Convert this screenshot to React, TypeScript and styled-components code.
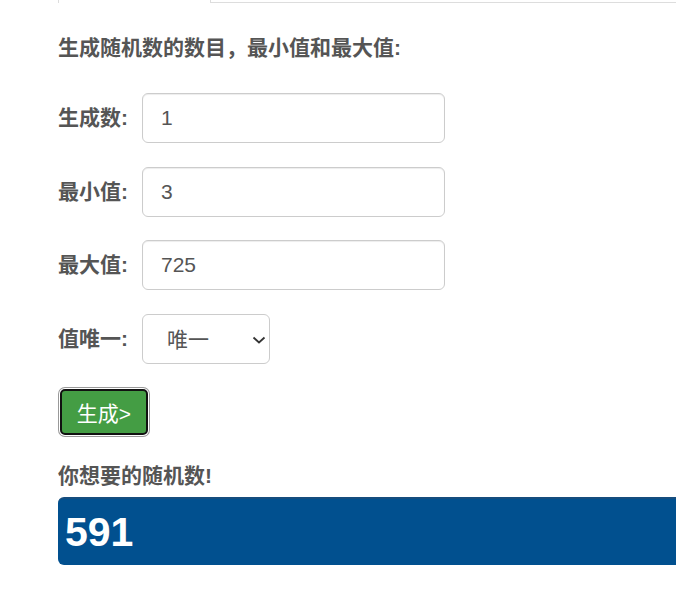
import React from 'react'
import styled, {createGlobalStyle} from 'styled-components'

const GlobalStyle = createGlobalStyle`
  html, body {
    margin: 0;
    padding: 0;
    background: #fff;
    overflow: hidden;
  }
  body {
    font-family: "Liberation Sans", Arial, "Noto Sans CJK SC", sans-serif;
    font-size: 21px;
    line-height: 1.42857;
    color: #555;
  }
`

const FONT = `"Liberation Sans", Arial, "Noto Sans CJK SC", sans-serif`

interface Field {
  label: string
  value: string
}

const FIELDS: Field[] = [
  {label: '生成数', value: '1'},
  {label: '最小值', value: '3'},
  {label: '最大值', value: '725'},
]

export default function App() {
  return (
    <>
      <GlobalStyle />
      <Page>
        <TabBar>
          <ActiveTab />
          <TabRest />
        </TabBar>
        <Content>
          <Heading>生成随机数的数目，最小值和最大值:</Heading>
          <Form>
            {FIELDS.map((field) => (
              <Row key={field.label}>
                <Label>{field.label}:</Label>
                <TextInput type="text" defaultValue={field.value} />
              </Row>
            ))}
            <Row>
              <Label>值唯一:</Label>
              <SelectWrap>
                <Select defaultValue="1">
                  <option value="1">唯一</option>
                  <option value="0">不唯一</option>
                </Select>
                <Chevron width="14" height="8" viewBox="0 0 14 8">
                  <path d="M1.5 1.5 L7 6.5 L12.5 1.5" fill="none" stroke="#333" strokeWidth="1.8" />
                </Chevron>
              </SelectWrap>
            </Row>
          </Form>
          <GenerateButton type="button">生成&gt;</GenerateButton>
          <ResultTitle>你想要的随机数!</ResultTitle>
          <ResultBox>591</ResultBox>
        </Content>
      </Page>
    </>
  )
}

const Page = styled.div`
  width: 100%;
`

const TabBar = styled.div`
  display: flex;
  height: 3px;
  padding-left: 58px;
`

const ActiveTab = styled.div`
  width: 151px;
  height: 3px;
  border-left: 1px solid #ddd;
  border-right: 1px solid #ddd;
  background: #fff;
`

const TabRest = styled.div`
  flex: 1;
  height: 2px;
  border-bottom: 1px solid #ddd;
`

const Content = styled.div`
  padding-left: 58px;
`

const Heading = styled.div`
  margin-top: 30px;
  font-weight: bold;
  color: #555;
`

const Form = styled.div`
  display: flex;
  flex-direction: column;
  gap: 23.7px;
  margin-top: 30px;
`

const Row = styled.div`
  display: flex;
  align-items: center;
`

const Label = styled.label`
  width: 84px;
  font-weight: bold;
  color: #555;
`

const TextInput = styled.input`
  box-sizing: border-box;
  width: 303px;
  height: 50px;
  padding: 0 18px;
  border: 1px solid #ccc;
  border-radius: 6px;
  font-family: ${FONT};
  font-size: 21px;
  color: #555;
  background: #fff;
  box-shadow: inset 0 1px 1px rgba(0, 0, 0, 0.075);
  outline: none;
`

const SelectWrap = styled.div`
  position: relative;
  width: 128px;
  height: 50px;
`

const Select = styled.select`
  appearance: none;
  box-sizing: border-box;
  width: 100%;
  height: 100%;
  padding: 0 0 0 24px;
  border: 1px solid #ccc;
  border-radius: 6px;
  font-family: ${FONT};
  font-size: 21px;
  color: #555;
  background: #fff;
  outline: none;
`

const Chevron = styled.svg`
  position: absolute;
  right: 4px;
  top: 22px;
  pointer-events: none;
`

const GenerateButton = styled.button`
  display: block;
  box-sizing: border-box;
  width: 88px;
  height: 46px;
  margin: 25px 0 0 2px;
  padding: 0;
  border: 2px solid #111;
  border-radius: 5px;
  background: #449d44;
  color: #fff;
  font-family: ${FONT};
  font-size: 21px;
  box-shadow: 0 0 0 1px #fff, 0 0 0 2px #999;
  cursor: pointer;
`

const ResultTitle = styled.div`
  margin-top: 26px;
  font-weight: bold;
  color: #555;
`

const ResultBox = styled.div`
  box-sizing: border-box;
  height: 68px;
  margin-top: 6px;
  padding-left: 7px;
  display: flex;
  align-items: center;
  background: #01508f;
  border-top: 2px solid #164d7e;
  border-radius: 6px 0 0 6px;
  color: #fff;
  font-family: ${FONT};
  font-size: 41px;
  font-weight: bold;
`
